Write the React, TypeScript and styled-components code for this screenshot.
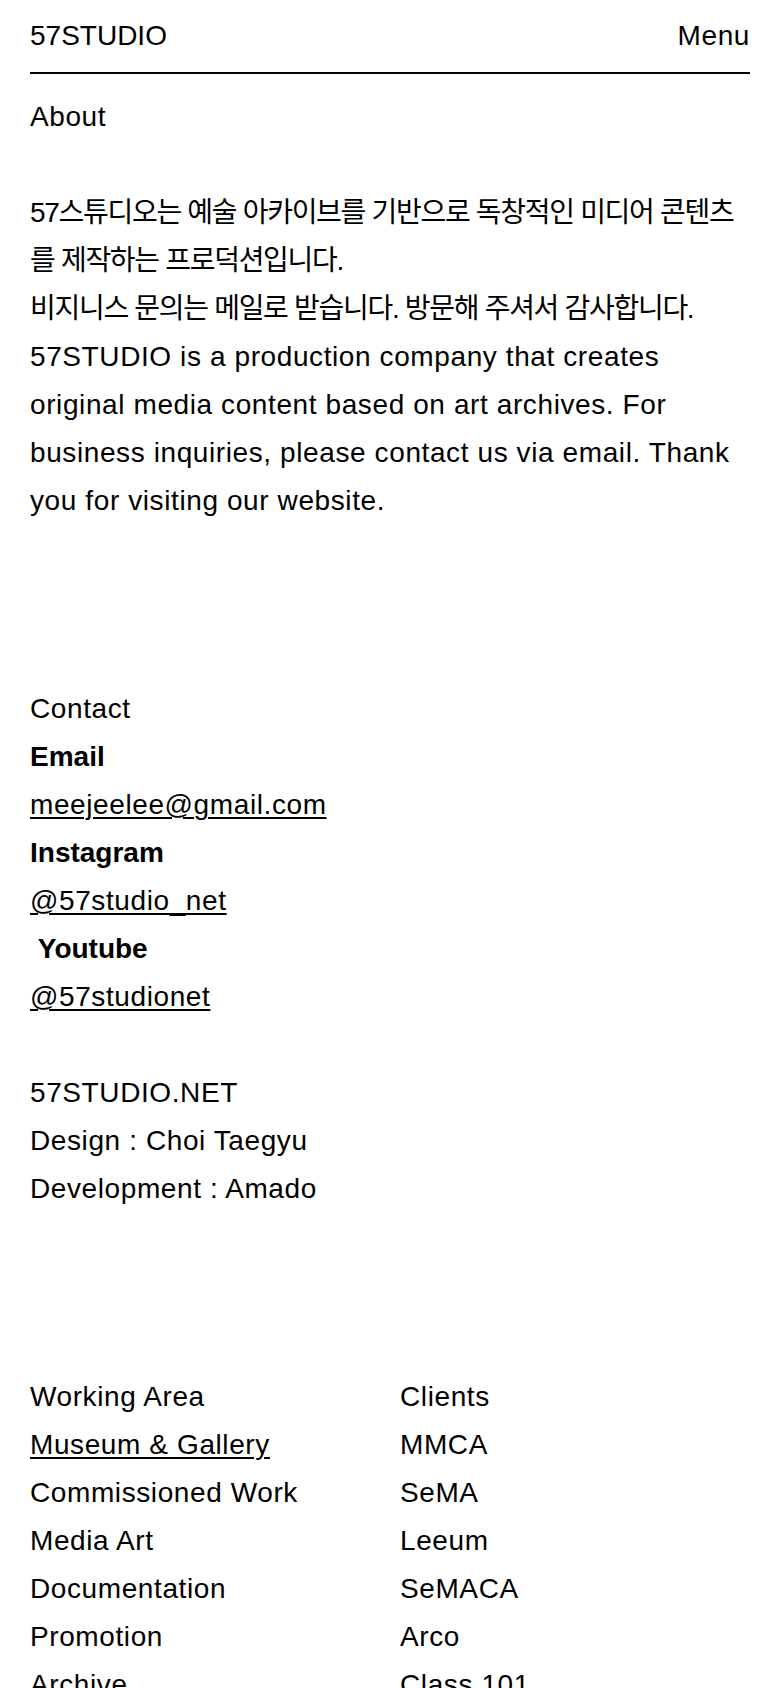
import React from "react";
import styled, { createGlobalStyle } from "styled-components";

const GlobalStyle = createGlobalStyle`
  * {
    box-sizing: border-box;
  }
  body {
    margin: 0;
    background-color: #fff;
    color: #000;
    font-family: "Liberation Sans", "Noto Sans CJK KR", Arial, sans-serif;
    font-size: 28px;
    line-height: 48px;
    letter-spacing: 0.6px;
  }
`;

const Page = styled.div`
  padding: 0 30px;
  width: 100%;
`;

const Header = styled.header`
  display: flex;
  justify-content: space-between;
  align-items: center;
  padding: 12px 0;
  border-bottom: 2px solid #000;
`;

const Logo = styled.a`
  color: #000;
  text-decoration: none;
  letter-spacing: 0;
`;

const MenuButton = styled.button`
  border: none;
  background: none;
  padding: 0;
  font: inherit;
  letter-spacing: inherit;
  color: #000;
  cursor: pointer;
`;

const Main = styled.main`
  padding-top: 19px;
`;

const Section = styled.section<{ $gap?: number }>`
  margin-top: ${(props) => props.$gap ?? 0}px;
`;

const Title = styled.h2`
  margin: 0;
  font: inherit;
`;

const Paragraph = styled.p`
  margin: 48px 0 0;
`;

const Korean = styled.span`
  letter-spacing: -1.3px;
`;

const Label = styled.div`
  font-weight: 700;
  letter-spacing: 0;
  white-space: pre;
`;

const Link = styled.a`
  display: block;
  width: fit-content;
  color: #000;
  text-decoration: underline;
  text-decoration-thickness: 1.5px;
  text-underline-offset: 3px;
`;

const Line = styled.div<{ $gapTop?: boolean }>`
  margin-top: ${(props) => (props.$gapTop ? "48px" : "0")};
`;

const Columns = styled.div`
  display: grid;
  grid-template-columns: 1fr 1fr;
  column-gap: 20px;
`;

const List = styled.ul`
  list-style: none;
  margin: 0;
  padding: 0;
`;

const Item = styled.li<{ $active?: boolean }>`
  text-decoration: ${(props) => (props.$active ? "underline" : "none")};
  text-decoration-thickness: 1.5px;
  text-underline-offset: 3px;
`;

const workingArea = [
  "Museum & Gallery",
  "Commissioned Work",
  "Media Art",
  "Documentation",
  "Promotion",
  "Archive",
];

const clients = ["MMCA", "SeMA", "Leeum", "SeMACA", "Arco", "Class 101"];

const App = () => {
  return (
    <Page>
      <GlobalStyle />
      <Header>
        <Logo href="#">57STUDIO</Logo>
        <MenuButton>Menu</MenuButton>
      </Header>
      <Main>
        <Section>
          <Title>About</Title>
          <Paragraph>
            <Korean>
              57스튜디오는 예술 아카이브를 기반으로 독창적인 미디어 콘텐츠를 제작하는
              프로덕션입니다.
              <br />
              비지니스 문의는 메일로 받습니다. 방문해 주셔서 감사합니다.
            </Korean>
            <br />
            57STUDIO is a production company that creates original media content
            based on art archives. For business inquiries, please contact us via
            email. Thank you for visiting our website.
          </Paragraph>
        </Section>

        <Section $gap={160}>
          <Title>Contact</Title>
          <Label>Email</Label>
          <Link href="#">meejeelee@gmail.com</Link>
          <Label>Instagram</Label>
          <Link href="#">@57studio_net</Link>
          <Label>{"\u00a0Youtube"}</Label>
          <Link href="#">@57studionet</Link>
          <Line $gapTop>57STUDIO.NET</Line>
          <Line>Design : Choi Taegyu</Line>
          <Line>Development : Amado</Line>
        </Section>

        <Section $gap={160}>
          <Columns>
            <List>
              <Item>Working Area</Item>
              {workingArea.map((name, i) => (
                <Item key={name} $active={i === 0}>
                  {name}
                </Item>
              ))}
            </List>
            <List>
              <Item>Clients</Item>
              {clients.map((name) => (
                <Item key={name}>{name}</Item>
              ))}
            </List>
          </Columns>
        </Section>
      </Main>
    </Page>
  );
};

export default App;
